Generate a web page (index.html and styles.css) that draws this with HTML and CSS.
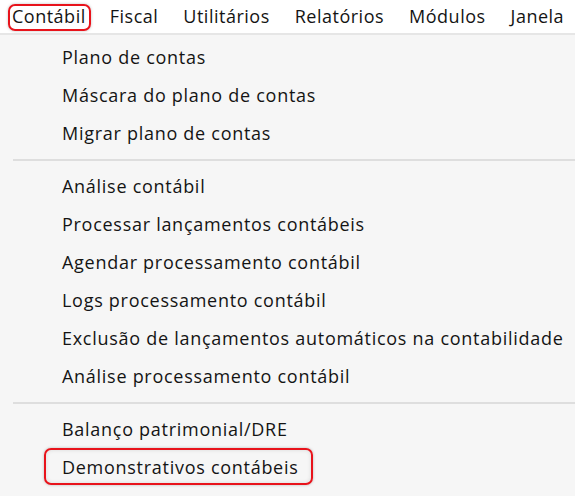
FILE: index.html
```html
<!DOCTYPE html>
<html lang="pt">
<head>
<meta charset="utf-8">
<link rel="stylesheet" href="styles.css">
</head>
<body>
<div class="menubar">
  <span class="top-item active">Contábil</span>
  <span class="top-item">Fiscal</span>
  <span class="top-item">Utilitários</span>
  <span class="top-item">Relatórios</span>
  <span class="top-item">Módulos</span>
  <span class="top-item">Janela</span>
</div>
<div class="dropdown">
  <div class="item">Plano de contas</div>
  <div class="item">Máscara do plano de contas</div>
  <div class="item">Migrar plano de contas</div>
  <div class="sep"></div>
  <div class="item">Análise contábil</div>
  <div class="item">Processar lançamentos contábeis</div>
  <div class="item">Agendar processamento contábil</div>
  <div class="item">Logs processamento contábil</div>
  <div class="item">Exclusão de lançamentos automáticos na contabilidade</div>
  <div class="item">Análise processamento contábil</div>
  <div class="sep"></div>
  <div class="item">Balanço patrimonial/DRE</div>
  <div class="item"><span class="highlight">Demonstrativos contábeis</span></div>
  <div class="item">Relacionamento contábil de contas</div>
</div>
</body>
</html>
```
FILE: styles.css
```css
html, body {
  margin: 0;
  padding: 0;
  background: #f6f6f6;
  overflow: hidden;
}
body {
  width: 575px;
  height: 496px;
  font-family: "Open Sans", "Noto Sans", sans-serif;
  font-size: 18px;
  letter-spacing: 0.72px;
  color: #141414;
}
.menubar {
  display: flex;
  align-items: center;
  height: 33px;
  background: #ffffff;
  border-bottom: 2px solid #e6e6e6;
  padding-left: 12px;
  gap: 25px;
  white-space: nowrap;
  font-size: 18px;
  letter-spacing: 0.5px;
}
.top-item {
  position: relative;
  line-height: 33px;
}
.top-item.active {
  margin-right: -1px;
}
.top-item.active::after {
  content: "";
  position: absolute;
  left: -4px;
  right: -5px;
  top: 4px;
  bottom: 2px;
  border: 2px solid #e8131b;
  border-radius: 7px;
  box-shadow: 0 0 3px rgba(0,0,0,0.25);
}
.dropdown {
  padding-top: 3px;
}
.item {
  height: 38px;
  line-height: 38px;
  padding-left: 62px;
  white-space: nowrap;
}
.sep {
  height: 2px;
  margin: 7px 0 6px 13px;
  background: #dedede;
}
.highlight {
  position: relative;
  display: inline-block;
}
.highlight::after {
  content: "";
  position: absolute;
  left: -18px;
  right: -14px;
  top: 0;
  bottom: 1px;
  border: 2px solid #e8131b;
  border-radius: 7px;
  box-shadow: 0 0 3px rgba(0,0,0,0.25), inset 0 0 4px rgba(0,0,0,0.12);
}
```
